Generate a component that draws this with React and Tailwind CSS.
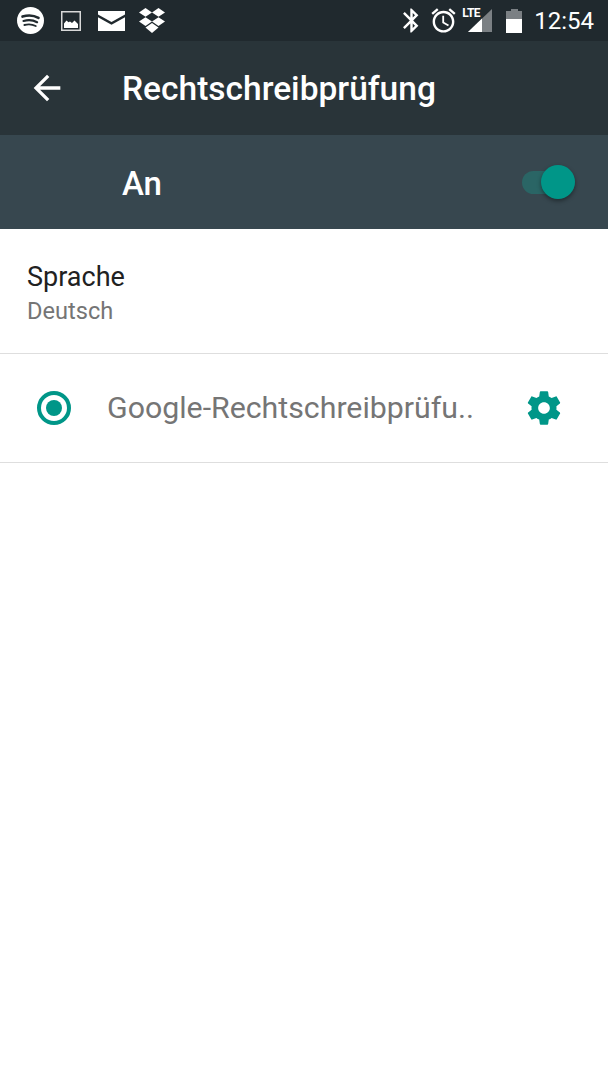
import React from 'react';

function Spotify() {
    return (
        <svg width="27" height="27" viewBox="0 0 27 27" className="shrink-0">
            <circle cx="13.5" cy="13.5" r="13.5" fill="#fff" />
            <path d="M5.5 9.6c5.5-1.7 11.5-1.2 16 1.3" stroke="#222b30" strokeWidth="2.6" fill="none" strokeLinecap="round" />
            <path d="M6.5 14c4.7-1.3 9.7-.9 13.6 1.2" stroke="#222b30" strokeWidth="2.2" fill="none" strokeLinecap="round" />
            <path d="M7.4 18c3.9-1 8-.7 11.3 1" stroke="#222b30" strokeWidth="1.9" fill="none" strokeLinecap="round" />
        </svg>
    );
}

function PhotoIcon() {
    return (
        <svg width="20" height="20" viewBox="0 0 20 20" className="shrink-0">
            <rect x="0.75" y="0.75" width="18.5" height="18.5" fill="none" stroke="#d8d8d8" strokeWidth="1.5" />
            <path d="M3 17v-4.500L5.500 9.500l2 1.800 1.500-.8 2 1.500 2.500-2.500 3.500 3.500V17z" fill="#fff" />
        </svg>
    );
}

function MailIcon() {
    return (
        <svg width="27" height="20" viewBox="0 0 27 20" className="shrink-0">
            <path d="M0 0h27v3.500L13.500 11 0 3.500z" fill="#fff" />
            <path d="M0 6.200l13.500 7.500L27 6.200V20H0z" fill="#fff" />
        </svg>
    );
}

function DropboxIcon() {
    return (
        <svg width="26" height="25" viewBox="0 0 26 25" className="shrink-0">
            <path d="M6.500 0L13 4.400 6.500 8.800 0 4.400z" fill="#fff" />
            <path d="M19.500 0L26 4.400 19.500 8.800 13 4.400z" fill="#fff" />
            <path d="M6.500 9.200L13 13.600 6.500 18 0 13.600z" fill="#fff" />
            <path d="M19.500 9.200L26 13.600 19.500 18 13 13.600z" fill="#fff" />
            <path d="M6.500 19.400L13 15l6.500 4.400L13 25z" fill="#fff" />
        </svg>
    );
}

function Bluetooth() {
    return (
        <svg width="29" height="29" viewBox="0 0 24 24" fill="#fff" className="shrink-0">
            <path d="M17.71 7.71L12 2h-1v7.590L6.410 5 5 6.410 10.590 12 5 17.590 6.410 19 11 14.410V22h1l5.710-5.710-4.300-4.290 4.300-4.290zM13 5.830l1.880 1.880L13 9.590V5.830zm1.880 10.460L13 18.170v-3.760l1.880 1.880z" />
        </svg>
    );
}

function Alarm() {
    return (
        <svg width="29" height="29" viewBox="0 0 24 24" fill="#fff" className="shrink-0">
            <path d="M22 5.720l-4.600-3.860-1.290 1.530 4.600 3.860L22 5.720zM7.880 3.390L6.600 1.860 2 5.710l1.290 1.530 4.590-3.850zM12.500 8H11v6l4.750 2.850.75-1.230-4-2.370V8zM12 4c-4.970 0-9 4.030-9 9s4.030 9 9 9 9-4.030 9-9-4.030-9-9-9zm0 16c-3.870 0-7-3.130-7-7s3.130-7 7-7 7 3.130 7 7-3.130 7-7 7z" />
        </svg>
    );
}

function Signal() {
    return (
        <div className="relative w-[30px] h-[25px] shrink-0">
            <svg width="24" height="23" viewBox="0 0 24 23" className="absolute left-[6px] top-[1px]">
                <path d="M24 0v23H0z" fill="#7b8084" />
                <path d="M14 9.600V23H0z" fill="#fff" />
            </svg>
            <span className="absolute left-0 top-[-1px] text-[12px] leading-[12px] font-bold text-white tracking-[-0.5px] [font-family:Roboto,sans-serif]">LTE</span>
        </div>
    );
}

function Battery() {
    return (
        <div className="flex flex-col items-center w-[16px] h-[24px] shrink-0">
            <div className="w-[7px] h-[2px] bg-[#7b8084]" />
            <div className="w-[16px] h-[8px] bg-[#7b8084]" />
            <div className="w-[16px] h-[14px] bg-white" />
        </div>
    );
}

export default function App() {
    return (
        <div className="w-[608px] h-[1080px] bg-white flex flex-col [font-family:Roboto,sans-serif]">
            {/* Status bar */}
            <div className="h-[41px] shrink-0 bg-[#20292e] flex items-center pl-[17px] pr-[14px]">
                <Spotify />
                <div className="ml-[17px]"><PhotoIcon /></div>
                <div className="ml-[17px]"><MailIcon /></div>
                <div className="ml-[14px]"><DropboxIcon /></div>
                <div className="ml-auto flex items-center">
                    <Bluetooth />
                    <div className="ml-[3px]"><Alarm /></div>
                    <div className="ml-[4px]"><Signal /></div>
                    <div className="ml-[14px]"><Battery /></div>
                    <span className="ml-[12px] text-[24px] leading-none text-white">12:54</span>
                </div>
            </div>

            {/* Toolbar */}
            <div className="h-[94px] shrink-0 bg-[#293439] flex items-center">
                <svg width="40" height="40" viewBox="0 0 24 24" fill="#fff" className="ml-[27px] shrink-0">
                    <path d="M20 11H7.830l5.590-5.590L12 4l-8 8 8 8 1.410-1.410L7.830 13H20v-2z" />
                </svg>
                <span className="ml-[55px] mt-[2px] text-[33.5px] leading-none font-medium text-white">Rechtschreibprüfung</span>
            </div>

            {/* Master switch */}
            <div className="h-[94px] shrink-0 bg-[#37474f] flex items-center pl-[122px] pr-[33px] justify-between">
                <span className="text-[33px] leading-none font-medium text-white mt-[3px]">An</span>
                <div className="relative w-[53px] h-[23px] rounded-full bg-[#2a6565]">
                    <div className="absolute right-0 top-[-6px] w-[34px] h-[34px] rounded-full bg-[#009688] shadow-[0_2px_4px_rgba(0,0,0,0.4)]" />
                </div>
            </div>

            {/* Sprache */}
            <div className="h-[125px] shrink-0 border-b-[1.5px] border-[#dedede] flex flex-col justify-center pl-[27px] pt-[4px]">
                <span className="text-[27px] leading-[36px] text-[#212121]">Sprache</span>
                <span className="text-[23.6px] leading-[32px] text-[#757575]">Deutsch</span>
            </div>

            {/* Spell checker row */}
            <div className="h-[109px] shrink-0 border-b-[1.5px] border-[#dedede] flex items-center">
                <div className="ml-[37px] w-[34px] h-[34px] rounded-full border-[4px] border-[#009688] flex items-center justify-center shrink-0">
                    <div className="w-[16px] h-[16px] rounded-full bg-[#009688]" />
                </div>
                <span className="ml-[36px] text-[30.3px] leading-none text-[#757575] whitespace-nowrap">Google-Rechtschreibprüfu..</span>
                <svg width="40" height="40" viewBox="0 0 24 24" fill="#009688" className="ml-auto mr-[44px] shrink-0">
                    <path d="M19.430 12.980c.040-.320.070-.640.070-.980s-.030-.660-.070-.980l2.110-1.650c.190-.150.240-.420.120-.640l-2-3.460c-.120-.220-.390-.300-.610-.220l-2.490 1c-.520-.400-1.080-.730-1.690-.980l-.380-2.650C14.460 2.180 14.250 2 14 2h-4c-.250 0-.460.180-.490.420l-.380 2.650c-.610.250-1.170.590-1.690.980l-2.490-1c-.230-.090-.490 0-.610.220l-2 3.460c-.130.220-.070.490.120.640l2.110 1.650c-.040.320-.070.650-.070.980s.030.660.070.980l-2.110 1.650c-.190.150-.240.420-.120.640l2 3.460c.120.220.390.300.610.220l2.490-1c.520.400 1.080.730 1.690.980l.380 2.650c.030.240.240.420.490.420h4c.250 0 .460-.180.490-.420l.380-2.650c.610-.250 1.170-.590 1.690-.980l2.490 1c.230.090.490 0 .610-.220l2-3.460c.120-.220.070-.490-.120-.640l-2.110-1.650zM12 15.500c-1.930 0-3.500-1.570-3.500-3.500s1.570-3.500 3.500-3.500 3.500 1.570 3.500 3.500-1.570 3.500-3.500 3.500z" />
                </svg>
            </div>
        </div>
    );
}
